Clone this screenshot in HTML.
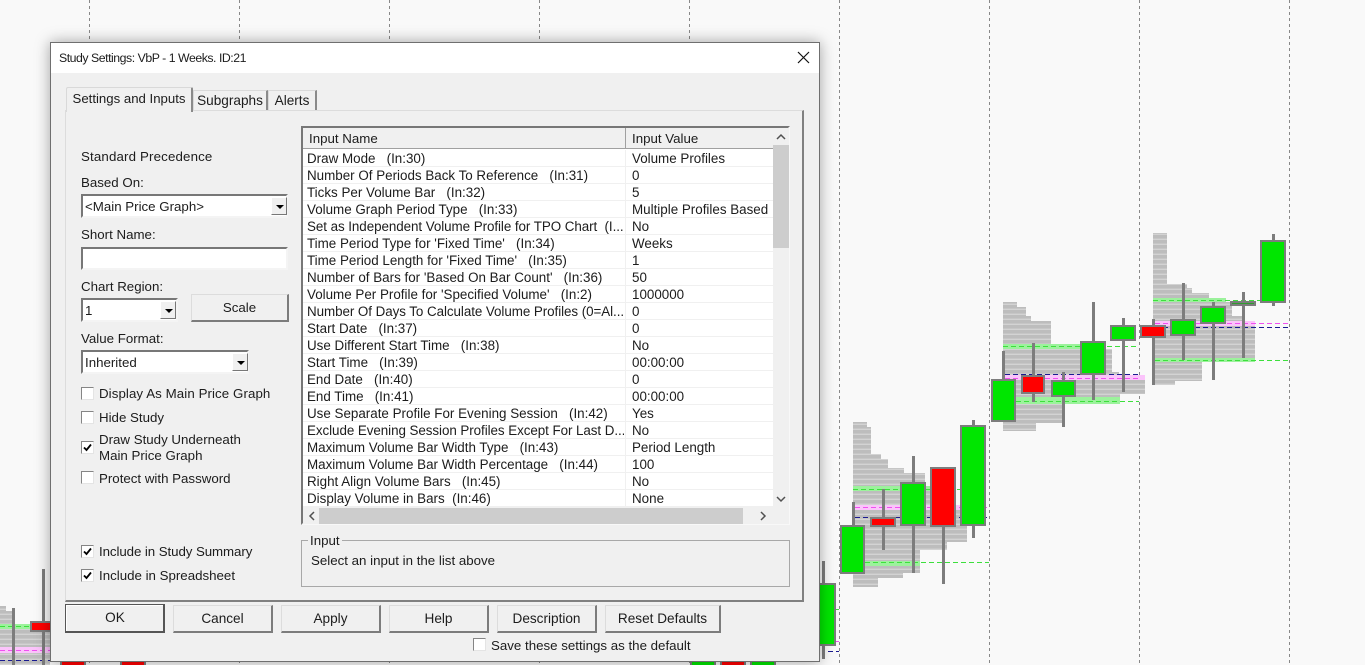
<!DOCTYPE html>
<html><head><meta charset="utf-8"><style>
html,body{margin:0;padding:0;width:1365px;height:665px;overflow:hidden;background:#f9f9f9}
body{position:relative;font-family:"Liberation Sans",Arial,sans-serif;font-size:13.3px;color:#1c1c1c}
.a{position:absolute;white-space:pre;line-height:16px}
#dlg{position:absolute;left:50px;top:42px;width:768px;height:618px;background:#f0f0f0;border:1px solid #6f6f6f;box-shadow:0 0 14px rgba(0,0,0,.35)}
#ti{position:absolute;left:51px;top:43px;width:768px;height:30px;background:#fff}
.tab{position:absolute;background:#f0f0f0;border:1px solid #d9d9d9;border-right:2px solid #8a8a8a;border-bottom:none;box-sizing:border-box;text-align:center}
.btn{position:absolute;box-sizing:border-box;background:#f0f0f0;border:1px solid #dcdcdc;border-right:2px solid #7c7c7c;border-bottom:2px solid #7c7c7c;text-align:center;font-size:13.6px;line-height:25px}
.cb{position:absolute;box-sizing:border-box;width:13px;height:13px;background:#fff;border:1px solid #e4e4e4;border-top-color:#858585;border-left-color:#858585}
.cb svg{position:absolute;left:0;top:0}
.combo{position:absolute;box-sizing:border-box;background:#fff;border:2px solid #777;border-right-color:#f4f4f4;border-bottom-color:#f4f4f4;line-height:22px;padding-left:2px;font-size:13.3px}
.ar{position:absolute;box-sizing:border-box;background:#f0f0f0;border:1px solid #fff;border-right:1px solid #777;border-bottom:1px solid #777;width:16px}
.ar:after{content:"";position:absolute;left:4px;top:7px;border:4px solid transparent;border-top:4px solid #000;border-bottom:none}
.r{position:absolute;left:303px;width:470px;height:17px;border-bottom:1px solid #f0f0f0;box-sizing:border-box;background:#fff;line-height:16px;font-size:13.4px;white-space:pre;overflow:hidden}
.r b{font-weight:normal;position:absolute;left:4px;top:1px;width:317px;overflow:hidden}
.r b.n{letter-spacing:-.06px}
.r i{font-style:normal;position:absolute;left:329px;top:1px}
.r:after{content:"";position:absolute;left:322px;top:0;height:17px;border-left:1px solid #f0f0f0}
</style></head><body>
<svg width="1365" height="665" style="position:absolute;left:0;top:0">
<defs><pattern id="p" width="5" height="5" patternUnits="userSpaceOnUse"><rect width="5" height="5" fill="#d3d3d3"/><rect width="5" height="3.6" fill="#bdbdbd"/></pattern></defs>
<g stroke="#888" stroke-width="1" stroke-dasharray="3 3">
<path d="M89.500 0V665M239.500 0V665M389.500 0V665M539.500 0V665M689.500 0V665M839.500 0V665M989.500 0V665M1139.500 0V665M1289.500 0V665"/>
</g>
<g fill="url(#p)">
<!-- profile 1 -->
<rect x="853" y="422" width="14" height="5"/><rect x="853" y="427" width="18" height="27"/><rect x="853" y="454" width="28" height="5"/><rect x="853" y="459" width="35" height="9"/><rect x="853" y="468" width="51" height="5"/><rect x="853" y="473" width="72" height="13"/><rect x="853" y="491" width="100" height="14"/><rect x="853" y="510" width="114" height="32"/><rect x="853" y="542" width="94" height="8"/><rect x="853" y="550" width="67" height="11"/><rect x="853" y="566" width="67" height="7"/><rect x="853" y="573" width="50" height="5"/><rect x="853" y="578" width="25" height="9"/>
<!-- profile 2 -->
<rect x="1003" y="302" width="14" height="5"/><rect x="1003" y="307" width="23" height="9"/><rect x="1003" y="316" width="28" height="5"/><rect x="1003" y="321" width="48" height="23"/><rect x="1003" y="349" width="109" height="4"/><rect x="1003" y="353" width="109" height="19"/><rect x="1003" y="372" width="116" height="3"/><rect x="1003" y="380" width="142" height="14"/><rect x="1003" y="394" width="117" height="3"/><rect x="1003" y="404" width="60" height="19"/><rect x="1003" y="423" width="33" height="8"/>
<!-- profile 3 -->
<rect x="1153" y="233" width="14" height="51"/><rect x="1153" y="284" width="34" height="4"/><rect x="1153" y="288" width="39" height="5"/><rect x="1153" y="293" width="56" height="5"/><rect x="1153" y="302" width="79" height="14"/><rect x="1153" y="316" width="89" height="5"/><rect x="1153" y="326" width="102" height="32"/><rect x="1153" y="362" width="49" height="19"/><rect x="1153" y="381" width="22" height="4"/>
<!-- left profile -->
<rect x="0" y="606" width="6" height="5"/><rect x="0" y="611" width="14" height="13"/><rect x="0" y="629" width="50" height="18"/><rect x="0" y="653" width="50" height="12"/>
</g>
<g fill="#9cf29c">
<rect x="853" y="486" width="77" height="5"/><rect x="865" y="561" width="55" height="5"/><rect x="1003" y="344" width="80" height="5"/><rect x="1016" y="397" width="104" height="7"/><rect x="1153" y="298" width="73" height="4"/><rect x="1155" y="358" width="100" height="4"/><rect x="0" y="624" width="30" height="5"/>
</g>
<g fill="#fbc4fb">
<rect x="855" y="505" width="105" height="5"/><rect x="1005" y="375" width="140" height="5"/><rect x="1155" y="321" width="100" height="5"/><rect x="0" y="647" width="50" height="6"/>
</g>
<g fill="none" stroke-width="1" stroke-dasharray="5 3">
<path stroke="#3ddf3d" d="M853 489.500H989M865 562.500H989M1003 346.500H1139M1016 401.500H1139M1153 300.500H1289M1155 360.500H1289M836 609.500H839M0 626.500H30"/>
<path stroke="#f050f0" d="M855 507.500H987M1005 378.500H1139M1155 323.500H1289M836 641.500H839M0 650.500H50"/>
<path stroke="#1a1a90" d="M855 517.500H987M1005 374.500H1139M1155 327.500H1289M828 651.500H839M0 660.500H50"/>
</g>
<g stroke="#7d7d7d" stroke-width="3">
<path d="M823.500 561V659M853.500 502V525M883.500 489V550M913.500 456V573M943.500 527V584M973.500 420V538M1003.500 351V379M1033.500 343V402M1063.500 372V427M1093.500 302V400M1123.500 318V392M1153.500 319V385M1183.500 283V360M1213.500 302V380M1243.500 292V358M1273.500 234V306M43.500 569V665M13.500 608V665"/>
</g>
<g stroke="#7d7d7d" stroke-width="2">
<g fill="#00e600">
<rect x="817" y="584" width="18" height="61"/><rect x="841" y="526" width="23" height="47"/><rect x="901" y="483" width="24" height="42"/><rect x="961" y="426" width="24" height="99"/><rect x="992" y="380" width="23" height="41"/><rect x="1052" y="381" width="23" height="15"/><rect x="1081" y="342" width="24" height="32"/><rect x="1111" y="326" width="24" height="14"/><rect x="1171" y="320" width="24" height="15"/><rect x="1201" y="307" width="24" height="16"/><rect x="1261" y="241" width="24" height="61"/>
<rect x="691" y="660" width="24" height="10"/><rect x="751" y="660" width="24" height="10"/>
</g>
<g fill="#f00">
<rect x="871" y="518" width="24" height="8"/><rect x="931" y="468" width="24" height="58"/><rect x="1022" y="376" width="22" height="17"/><rect x="1141" y="326" width="24" height="11"/><rect x="31" y="622" width="24" height="9"/><rect x="61" y="660" width="24" height="10"/><rect x="121" y="660" width="24" height="10"/><rect x="721" y="660" width="24" height="10"/>
</g>
<rect x="1231" y="302" width="24" height="3" fill="#2e9e2e"/>
</g>
</svg>

<div id="dlg"></div>
<div id="ti"></div>
<div class="a" style="left:59px;top:50px;font-size:12.3px;letter-spacing:-.47px">Study Settings: VbP - 1 Weeks. ID:21</div>
<svg style="position:absolute;left:797px;top:51px" width="13" height="13"><path d="M1 1L12 12M12 1L1 12" stroke="#111" stroke-width="1.2" fill="none"/></svg>

<!-- tab panel -->
<div style="position:absolute;left:65px;top:110px;width:739px;height:492px;box-sizing:border-box;border:1px solid #dcdcdc;border-right:2px solid #808080;border-bottom:2px solid #808080"></div>
<div class="tab" style="left:66px;top:87px;width:127px;height:25px;line-height:21px;border-radius:2px 2px 0 0;z-index:2;font-size:13.2px">Settings and Inputs</div>
<div class="tab" style="left:193px;top:90px;width:75px;height:20px;line-height:20px;font-size:13.6px">Subgraphs</div>
<div class="tab" style="left:268px;top:90px;width:49px;height:20px;line-height:20px;font-size:13.6px">Alerts</div>

<!-- left column -->
<div class="a" style="left:81px;top:149px;letter-spacing:.15px">Standard Precedence</div>
<div class="a" style="left:81px;top:175px">Based On:</div>
<div class="combo" style="left:81px;top:194px;width:207px;height:24px">&lt;Main Price Graph&gt;</div>
<div class="ar" style="left:271px;top:197px;height:18px"></div>
<div class="a" style="left:81px;top:227px">Short Name:</div>
<div class="combo" style="left:81px;top:247px;width:207px;height:23px"></div>
<div class="a" style="left:81px;top:279px">Chart Region:</div>
<div class="combo" style="left:81px;top:298px;width:97px;height:24px">1</div>
<div class="ar" style="left:160px;top:301px;height:18px"></div>
<div class="btn" style="left:191px;top:294px;width:98px;height:28px;font-size:13.3px">Scale</div>
<div class="a" style="left:81px;top:331px">Value Format:</div>
<div class="combo" style="left:81px;top:350px;width:168px;height:24px">Inherited</div>
<div class="ar" style="left:232px;top:353px;height:18px"></div>

<div class="cb" style="left:81px;top:387px"></div><div class="a" style="left:99px;top:386px;letter-spacing:.08px">Display As Main Price Graph</div>
<div class="cb" style="left:81px;top:411px"></div><div class="a" style="left:99px;top:410px">Hide Study</div>
<div class="cb" style="left:81px;top:441px"><svg width="11" height="11"><path d="M2 5.500L4.500 8L9 2.500" stroke="#000" stroke-width="1.800" fill="none"/></svg></div>
<div class="a" style="left:99px;top:432px">Draw Study Underneath</div><div class="a" style="left:99px;top:448px">Main Price Graph</div>
<div class="cb" style="left:81px;top:471px"></div><div class="a" style="left:99px;top:471px">Protect with Password</div>
<div class="cb" style="left:81px;top:545px"><svg width="11" height="11"><path d="M2 5.500L4.500 8L9 2.500" stroke="#000" stroke-width="1.800" fill="none"/></svg></div><div class="a" style="left:99px;top:544px;letter-spacing:-.08px">Include in Study Summary</div>
<div class="cb" style="left:81px;top:569px"><svg width="11" height="11"><path d="M2 5.500L4.500 8L9 2.500" stroke="#000" stroke-width="1.800" fill="none"/></svg></div><div class="a" style="left:99px;top:568px">Include in Spreadsheet</div>

<!-- list -->
<div style="position:absolute;left:301px;top:126px;width:489px;height:399px;box-sizing:border-box;background:#f0f0f0;border:2px solid #777;border-right-color:#f8f8f8;border-bottom-color:#f8f8f8"></div>
<div class="a" style="left:309px;top:131px;font-size:13.3px">Input Name</div>
<div class="a" style="left:632px;top:131px;font-size:13.3px">Input Value</div>
<div style="position:absolute;left:303px;top:148px;width:470px;height:1px;background:#a0a0a0"></div>
<div style="position:absolute;left:625px;top:128px;width:1px;height:20px;background:#a0a0a0"></div>
<div style="position:absolute;left:303px;top:149px;width:470px;height:1px;background:#fff"></div>
<div class="r" style="top:150px"><b>Draw Mode   (In:30)</b><i>Volume Profiles</i></div>
<div class="r" style="top:167px"><b>Number Of Periods Back To Reference   (In:31)</b><i>0</i></div>
<div class="r" style="top:184px"><b>Ticks Per Volume Bar   (In:32)</b><i>5</i></div>
<div class="r" style="top:201px"><b>Volume Graph Period Type   (In:33)</b><i>Multiple Profiles Based</i></div>
<div class="r" style="top:218px"><b class="n">Set as Independent Volume Profile for TPO Chart  (I...</b><i>No</i></div>
<div class="r" style="top:235px"><b>Time Period Type for 'Fixed Time'   (In:34)</b><i>Weeks</i></div>
<div class="r" style="top:252px"><b>Time Period Length for 'Fixed Time'   (In:35)</b><i>1</i></div>
<div class="r" style="top:269px"><b>Number of Bars for 'Based On Bar Count'   (In:36)</b><i>50</i></div>
<div class="r" style="top:286px"><b>Volume Per Profile for 'Specified Volume'   (In:2)</b><i>1000000</i></div>
<div class="r" style="top:303px"><b class="n">Number Of Days To Calculate Volume Profiles (0=Al...</b><i>0</i></div>
<div class="r" style="top:320px"><b>Start Date   (In:37)</b><i>0</i></div>
<div class="r" style="top:337px"><b>Use Different Start Time   (In:38)</b><i>No</i></div>
<div class="r" style="top:354px"><b>Start Time   (In:39)</b><i>00:00:00</i></div>
<div class="r" style="top:371px"><b>End Date   (In:40)</b><i>0</i></div>
<div class="r" style="top:388px"><b>End Time   (In:41)</b><i>00:00:00</i></div>
<div class="r" style="top:405px"><b>Use Separate Profile For Evening Session   (In:42)</b><i>Yes</i></div>
<div class="r" style="top:422px"><b class="n">Exclude Evening Session Profiles Except For Last D...</b><i>No</i></div>
<div class="r" style="top:439px"><b>Maximum Volume Bar Width Type   (In:43)</b><i>Period Length</i></div>
<div class="r" style="top:456px"><b>Maximum Volume Bar Width Percentage   (In:44)</b><i>100</i></div>
<div class="r" style="top:473px"><b>Right Align Volume Bars   (In:45)</b><i>No</i></div>
<div class="r" style="top:490px"><b>Display Volume in Bars  (In:46)</b><i>None</i></div>

<!-- scrollbars -->
<div style="position:absolute;left:773px;top:128px;width:16px;height:380px;background:#f0f0f0"></div>
<div style="position:absolute;left:773px;top:145px;width:16px;height:103px;background:#cdcdcd"></div>
<div style="position:absolute;left:303px;top:508px;width:486px;height:16px;background:#f0f0f0"></div>
<div style="position:absolute;left:319px;top:508px;width:424px;height:16px;background:#cdcdcd"></div>
<svg style="position:absolute;left:0;top:0" width="1365" height="665" fill="none" stroke="#505050" stroke-width="1.500">
<path d="M777 139L781 135L785 139M777 497L781 501L785 497M314 512L310 516L314 520M761 512L765 516L761 520"/>
</svg>

<!-- group box -->
<div style="position:absolute;left:301px;top:540px;width:489px;height:47px;box-sizing:border-box;border:1px solid #a8a8a8"></div>
<div class="a" style="left:308px;top:533px;background:#f0f0f0;padding:0 2px">Input</div>
<div class="a" style="left:311px;top:553px">Select an input in the list above</div>

<!-- buttons -->
<div class="btn" style="left:65px;top:604px;width:100px;height:29px;border:1px solid #555;border-right:2px solid #555;border-bottom:2px solid #555;box-shadow:inset 1px 1px 0 #fff;line-height:26px;padding-left:1px">OK</div>
<div class="btn" style="left:173px;top:605px;width:100px;height:28px">Cancel</div>
<div class="btn" style="left:281px;top:605px;width:100px;height:28px">Apply</div>
<div class="btn" style="left:389px;top:605px;width:100px;height:28px">Help</div>
<div class="btn" style="left:497px;top:605px;width:100px;height:28px">Description</div>
<div class="btn" style="left:605px;top:605px;width:116px;height:28px">Reset Defaults</div>
<div class="cb" style="left:473px;top:638px"></div>
<div class="a" style="left:491px;top:638px">Save these settings as the default</div>
</body></html>
